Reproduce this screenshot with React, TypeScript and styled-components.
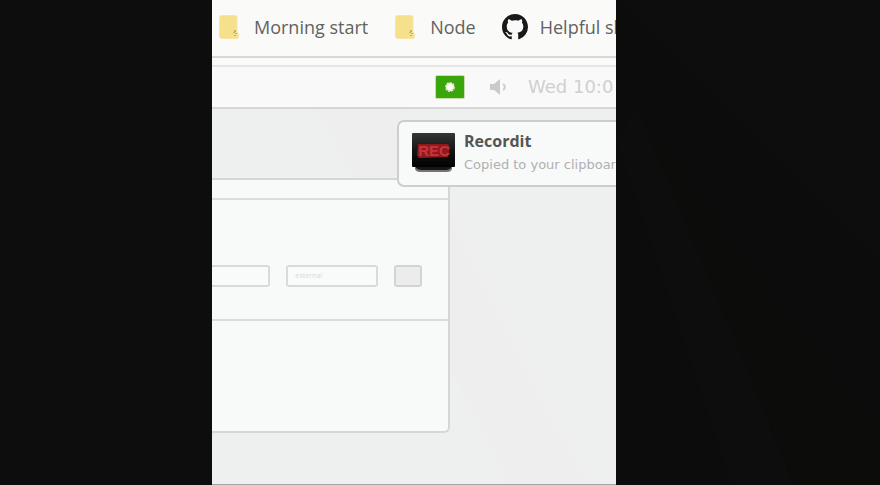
import React from "react";
import styled, { createGlobalStyle } from "styled-components";

const GlobalStyle = createGlobalStyle`
  * { box-sizing: border-box; }
  body { margin: 0; background: #0d0d0d; }
`;

const Stage = styled.main`
  display: grid;
  grid-template-columns: 212fr 404fr 264fr;
  min-height: 100vh;
  background: #0d0d0d;
`;

const Backdrop = styled.svg`
  grid-column: 3;
  width: 100%;
  height: 100%;
`;

const Screen = styled.section`
  grid-column: 2;
  display: flex;
  flex-direction: column;
  min-width: 0;
  overflow: hidden;
  background: #fafaf9;
  border-bottom: 1px solid #a3a5a4;
`;

const Bookmarks = styled.nav`
  display: flex;
  align-items: center;
  height: 58px;
  padding: 0 0 2px 6px;
  border-bottom: 2px solid #d8d8d7;
  white-space: nowrap;
`;

const Bookmark = styled.a`
  display: flex;
  align-items: center;
  flex: none;
  gap: 14px;
  margin-right: 26px;
  color: #62625f;
  font: 18px/24px "Open Sans", sans-serif;
  text-decoration: none;

  &:last-child { gap: 12px; }
`;

const MenuBar = styled.header`
  display: flex;
  align-items: center;
  height: 44px;
  margin-top: 7px;
  padding-left: 223px;
  border-top: 2px solid #e6e6e6;
  border-bottom: 2px solid #d6d6d6;
  background: #f9f9f9;
  white-space: nowrap;
`;

const RecordButton = styled.button`
  display: grid;
  place-items: center;
  flex: none;
  width: 30px;
  height: 24px;
  padding: 0;
  border: 1px solid #cbdcae;
  border-radius: 2px;
  background: #3aa60c;
`;

const VolumeButton = styled.button`
  flex: none;
  width: 20px;
  height: 20px;
  margin: 0 20px 0 23px;
  padding: 0;
  border: 0;
  background: none;
`;

const Clock = styled.time`
  color: #d0d0d0;
  font: 18px/24px "DejaVu Sans", sans-serif;
`;

const Desktop = styled.div`
  position: relative;
  flex: 1;
  padding-top: 69px;
  background: linear-gradient(63deg, #eef0f0 0 50%, #eeeeee 50% 60%, #eef0f0 70%);
`;

const AppWindow = styled.section`
  width: 59%;
  border: 2px solid #d6d6d6;
  border-left: 0;
  border-radius: 0 0 6px 0;
  background: #f8f9f9;
`;

const TitleBar = styled.div`
  height: 20px;
  border-bottom: 2px solid #dcdcdc;
`;

const FormRow = styled.form`
  display: flex;
  align-items: center;
  gap: 16px;
  height: 121px;
  padding: 32px 26px 0 0;
  border-bottom: 2px solid #dcdcdc;
`;

const Field = styled.input<{ $open?: boolean }>`
  flex: ${(p) => (p.$open ? "60 1 0" : "91 1 0")};
  min-width: 0;
  height: 22px;
  padding: 0 8px;
  border: 2px solid #dadada;
  border-left-width: ${(p) => (p.$open ? 0 : 2)}px;
  padding-left: ${(p) => (p.$open ? 0 : 7)}px;
  border-radius: ${(p) => (p.$open ? "0 3px 3px 0" : "3px")};
  background: #f9fafa;
  font: 7px/12px "Open Sans", sans-serif;
  &::placeholder { color: #dadada; opacity: 1; }
`;

const Submit = styled.button`
  width: 28px;
  height: 22px;
  padding: 0;
  border: 2px solid #d3d3d3;
  border-radius: 3px;
  background: #ececec;
`;

const WindowBody = styled.div`
  height: 110px;
`;

const Notification = styled.aside`
  position: absolute;
  top: 11px;
  right: -16px;
  display: flex;
  align-items: center;
  gap: 9px;
  width: 235px;
  height: 67px;
  padding: 0 0 2px 13px;
  overflow: hidden;
  border: 2px solid #cccdcd;
  border-radius: 7px;
  background: #f8f9f9;
  white-space: nowrap;
`;

const RecArt = styled.svg`
  flex: none;
  width: 43px;
  height: 42px;
`;

const Title = styled.strong`
  display: block;
  color: #535552;
  font: 700 16px/24px "Open Sans", sans-serif;
`;

const Message = styled.p`
  margin: 0;
  color: #b0b0b0;
  font: 13px/24px "DejaVu Sans", sans-serif;
`;

const Note = () => (
  <svg width="22" height="26" viewBox="0 0 22 26" aria-hidden="true">
    <path d="M4 1.500h13q2 0 2 2v14l1.500 3v2q0 2-2 2H4q-2.500 0-2.500-2.500V4Q1.500 1.500 4 1.500z" fill="#f7e08b" stroke="#f5e6a8" />
    <path d="M17 16v2M18 19v1M17 21v1M16 18v1" stroke="#6c9a2c" />
  </svg>
);

const GitHub = () => (
  <svg width="26" height="26" viewBox="0 0 16 16" aria-hidden="true">
    <path fill="#191919" d="M8 0C3.580 0 0 3.580 0 8c0 3.540 2.290 6.530 5.470 7.590.4.070.55-.17.55-.38 0-.19-.01-.82-.01-1.490-2.010.37-2.530-.49-2.690-.94-.09-.23-.48-.94-.82-1.130-.28-.15-.68-.52-.01-.53.63-.01 1.080.58 1.230.82.72 1.210 1.870.87 2.330.66.07-.52.28-.87.51-1.070-1.780-.2-3.640-.89-3.640-3.950 0-.87.31-1.590.82-2.150-.08-.2-.36-1.020.08-2.120 0 0 .67-.21 2.200.82A7.600 7.600 0 0 1 8 3.860c.68 0 1.360.09 2 .27 1.530-1.040 2.200-.82 2.200-.82.44 1.100.16 1.920.08 2.120.51.56.82 1.270.82 2.150 0 3.070-1.870 3.750-3.650 3.950.29.25.54.73.54 1.480 0 1.070-.01 1.930-.01 2.200 0 .21.15.46.55.38A8.010 8.010 0 0 0 16 8c0-4.420-3.580-8-8-8z" />
  </svg>
);

export default function App() {
  return (
    <>
      <GlobalStyle />
      <Stage>
        <Screen>
          <Bookmarks aria-label="Bookmarks">
            <Bookmark href="#morning"><Note />Morning start</Bookmark>
            <Bookmark href="#node"><Note />Node</Bookmark>
            <Bookmark href="#helpful"><GitHub />Helpful sl</Bookmark>
          </Bookmarks>
          <MenuBar>
            <RecordButton aria-label="Record">
              <svg width="12" height="12" viewBox="0 0 12 12" aria-hidden="true">
                <circle cx="6" cy="6" r="4" fill="#fffdf5" stroke="#d9e6c0" strokeWidth="2" strokeDasharray="2 1" />
              </svg>
            </RecordButton>
            <VolumeButton aria-label="Volume">
              <svg width="20" height="20" viewBox="0 0 20 20" aria-hidden="true">
                <path d="M2 7h4l6-5v16l-6-5H2z" fill="#cacaca" />
                <path d="M15 7q4 3 0 6" fill="none" stroke="#cfcfcf" strokeWidth="2" />
              </svg>
            </VolumeButton>
            <Clock>Wed 10:0</Clock>
          </MenuBar>
          <Desktop>
            <AppWindow aria-label="Window">
              <TitleBar />
              <FormRow onSubmit={(e) => e.preventDefault()}>
                <Field $open aria-label="First value" />
                <Field aria-label="Second value" placeholder="external" />
                <Submit type="button" aria-label="Submit" />
              </FormRow>
              <WindowBody />
            </AppWindow>
            <Notification>
              <RecArt viewBox="0 0 43 42" role="img" aria-label="REC">
                <defs>
                  <linearGradient id="case" x2="0" y2="1">
                    <stop offset="0" stopColor="#343735" />
                    <stop offset=".5" stopColor="#151515" />
                    <stop offset="1" stopColor="#000" />
                  </linearGradient>
                </defs>
                <path d="M3 34h37v3q-1 3-5 3H8q-4 0-5-3z" fill="#747674" />
                <path d="M4 34h35v2q-2 2-5 2H9q-3 0-5-2z" fill="#161616" />
                <rect y="1" width="43" height="34" rx="1" fill="url(#case)" />
                <path d="M6 12h30l2 3-2 10-29 1-2-3z" fill="#8e1a1f" />
                <text x="22" y="24" textAnchor="middle" fontFamily="Liberation Sans" fontWeight="700" fontSize="15" fill="#c9343a">REC</text>
              </RecArt>
              <div>
                <Title>Recordit</Title>
                <Message>Copied to your clipboard</Message>
              </div>
            </Notification>
          </Desktop>
        </Screen>
        <Backdrop viewBox="0 0 264 485" preserveAspectRatio="none" aria-hidden="true">
          <path d="M0 0 264 260V485H0z" fill="#0c0c0c" />
          <path d="M0 140 116 485h62L25 100z" fill="#0d0d0d" />
          <path d="M16 95 160 300 264 425V485H180z" fill="#0c0c0a" />
        </Backdrop>
      </Stage>
    </>
  );
}
